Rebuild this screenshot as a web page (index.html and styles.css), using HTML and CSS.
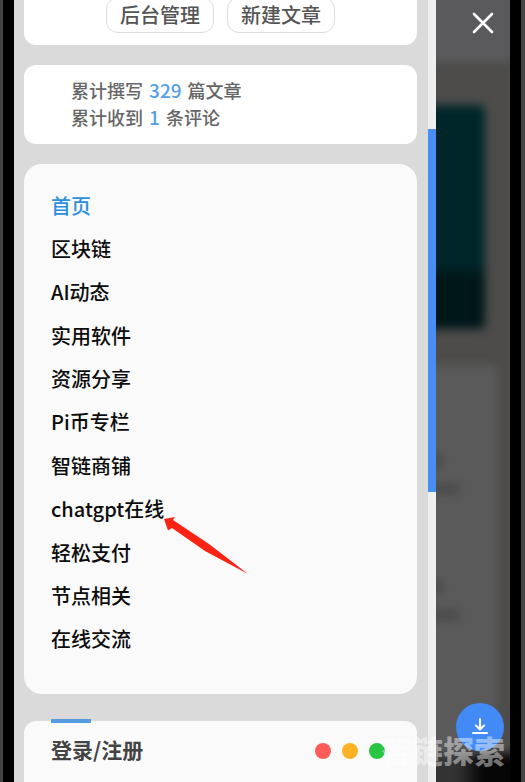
FILE: index.html
```html
<!DOCTYPE html>
<html lang="zh-CN">
<head>
    <meta charset="UTF-8">
    <meta name="viewport" content="width=device-width, initial-scale=1.0">
    <title>首页</title>
    <link rel="stylesheet" href="styles.css">
</head>
<body>
    <div class="phone">
        <aside class="drawer">
            <div class="card user-card">
                <button type="button" class="user-btn">后台管理</button>
                <button type="button" class="user-btn">新建文章</button>
            </div>
            <div class="card stats-card">
                <p>累计撰写 <b>329</b> 篇文章</p>
                <p>累计收到 <b>1</b> 条评论</p>
            </div>
            <nav class="card menu-card">
                <ul class="menu">
                    <li><a class="active" href="#">首页</a></li>
                    <li><a href="#">区块链</a></li>
                    <li><a href="#">AI动态</a></li>
                    <li><a href="#">实用软件</a></li>
                    <li><a href="#">资源分享</a></li>
                    <li><a href="#">Pi币专栏</a></li>
                    <li><a href="#">智链商铺</a></li>
                    <li>
                        <a href="#">chatgpt在线</a>
                        <svg class="pointer" viewBox="0 0 86 60" width="86" height="60" aria-hidden="true">
                            <path d="M1 3L12 1L10 4L46 28L85 58L42 35L9 12L5 14.500Z" fill="#fb2414"/>
                        </svg>
                    </li>
                    <li><a href="#">轻松支付</a></li>
                    <li><a href="#">节点相关</a></li>
                    <li><a href="#">在线交流</a></li>
                </ul>
            </nav>
            <section class="card login-card">
                <h2>登录/注册</h2>
                <div class="dots">
                    <span class="dot red"></span>
                    <span class="dot yellow"></span>
                    <span class="dot green"></span>
                </div>
            </section>
        </aside>
        <div class="scrollbar"><div class="thumb"></div></div>
        <div class="backdrop">
            <div class="blurred">
                <div class="page-head"></div>
                <div class="page-cover"></div>
                <div class="page-body">
                    <span class="line"></span>
                    <span class="line wide"></span>
                    <span class="line"></span>
                    <span class="line wide"></span>
                </div>
                <div class="page-foot"></div>
            </div>
            <button type="button" class="close-btn" aria-label="关闭">
                <svg viewBox="0 0 22 22" width="22" height="22">
                    <path d="M2 2L20 20M20 2L2 20" fill="none" stroke="#fff" stroke-width="2.6" stroke-linecap="round"/>
                </svg>
            </button>
            <button type="button" class="download-btn" aria-label="下载">
                <svg viewBox="0 0 18 18" width="18" height="18">
                    <path d="M9 1V11M5 7.500L9 11.500L13 7.500M2 15H16" fill="none" stroke="#fff" stroke-width="2" stroke-linecap="round" stroke-linejoin="round"/>
                </svg>
            </button>
        </div>
        <div class="watermark">智链探索</div>
    </div>
</body>
</html>
```
FILE: styles.css
```css
* {
    box-sizing: border-box;
}
body {
    margin: 0;
    padding: 0 4px 0 3px;
    height: 100vh;
    overflow: hidden;
    background-color: #434343;
    font-family: "Noto Sans CJK SC", sans-serif;
}
.phone {
    position: relative;
    display: flex;
    height: 100%;
    border: solid #000;
    border-width: 0 11px;
    overflow: hidden;
}
.drawer {
    flex: 1;
    display: flex;
    flex-direction: column;
    gap: 20px;
    padding: 0 11px 0 10px;
    background-color: #dadada;
    overflow: hidden;
}
.card {
    flex-shrink: 0;
    border-radius: 12px;
    background-color: #fff;
}
.user-card {
    display: flex;
    justify-content: center;
    gap: 13px;
    margin-top: -20px;
    padding: 17px 0 12px;
}
.user-btn {
    width: 108px;
    height: 36px;
    padding: 0;
    border: 1px solid #dcdcdc;
    border-radius: 12px;
    background-color: #fff;
    color: #555;
    font-family: inherit;
    font-size: 20px;
    font-weight: 500;
    line-height: 34px;
}
.stats-card {
    padding: 12px 47px 13px;
    color: #666;
    font-size: 18px;
    font-weight: 500;
    line-height: 27px;
}
.stats-card p {
    margin: 0;
}
.stats-card b {
    margin: 0 2px;
    color: #559fe5;
    font-size: 19px;
    font-weight: 500;
    line-height: 1;
}
.menu-card {
    padding: 20px 27px 33px;
    border-radius: 18px;
    background-color: #fafafa;
}
.menu {
    display: grid;
    grid-auto-rows: 1fr;
    height: 477px;
    margin: 0;
    padding: 0;
    list-style: none;
}
.menu li {
    position: relative;
    display: flex;
    align-items: center;
}
.menu a {
    color: #0c0c0c;
    font-size: 20px;
    font-weight: 500;
    line-height: 30px;
    text-decoration: none;
}
.menu a.active {
    color: #2a8fdc;
}
.pointer {
    position: absolute;
    top: 28px;
    left: 112px;
}
.login-card {
    display: flex;
    justify-content: space-between;
    align-items: flex-start;
    height: 120px;
    margin-top: 7px;
    padding: 0 32px 0 27px;
    background-color: #fafafa;
}
.login-card h2 {
    margin: -2px 0 0;
    color: #444;
    font-size: 21px;
    font-weight: 700;
    line-height: 32px;
}
.login-card h2::before {
    content: "";
    display: block;
    width: 40px;
    height: 4px;
    margin-bottom: 10px;
    background-color: #559be0;
}
.dots {
    display: flex;
    gap: 11px;
    margin-top: 22px;
}
.dot {
    width: 16px;
    height: 16px;
    border-radius: 50%;
}
.red {
    background-color: #fd5b57;
}
.yellow {
    background-color: #fdb124;
}
.green {
    background-color: #29c540;
}
.scrollbar {
    width: 8px;
    padding-top: 129px;
    background-color: #efeff0;
}
.thumb {
    height: 363px;
    background-color: #478ff5;
}
.backdrop {
    position: relative;
    width: 74px;
    overflow: hidden;
    background-color: #4d4c4b;
}
/* page content behind the opened drawer */
.blurred {
    display: flex;
    flex-direction: column;
    height: 100%;
    margin-left: -30px;
    filter: blur(5px);
}
.page-head {
    height: 62px;
    margin: -20px -20px 0 0;
    padding-top: 20px;
    box-sizing: content-box;
    background-color: #5a5a5c;
}
.page-cover {
    height: 224px;
    margin: 43px 25px 36px 0;
    border-radius: 6px;
    background: linear-gradient(#002629 72%, #001719 76%);
}
.page-body {
    display: flex;
    flex: 1;
    flex-direction: column;
    gap: 32px;
    margin-right: 13px;
    padding-top: 90px;
    background-color: #5a5a5b;
}
.line {
    width: 38px;
    height: 12px;
    background-color: #4b4b4b;
}
.wide {
    width: 54px;
    margin-top: -16px;
    margin-bottom: 54px;
}
.page-foot {
    height: 28px;
    margin: 0 -20px -20px 20px;
    padding-bottom: 20px;
    box-sizing: content-box;
    background: linear-gradient(90deg, #333 30%, #050505 55%);
}
.close-btn, .download-btn {
    position: absolute;
    display: flex;
    justify-content: center;
    align-items: center;
    padding: 0;
    border: none;
    cursor: pointer;
}
.close-btn {
    top: 8px;
    right: 12px;
    width: 30px;
    height: 30px;
    background: none;
}
.download-btn {
    right: 6px;
    bottom: 31px;
    width: 48px;
    height: 48px;
    border-radius: 50%;
    background-color: #428af5;
}
.watermark {
    position: absolute;
    right: 5px;
    bottom: 12px;
    color: rgba(255, 255, 255, 0.45);
    font-size: 31px;
    font-weight: 900;
    line-height: 40px;
    pointer-events: none;
}
```
